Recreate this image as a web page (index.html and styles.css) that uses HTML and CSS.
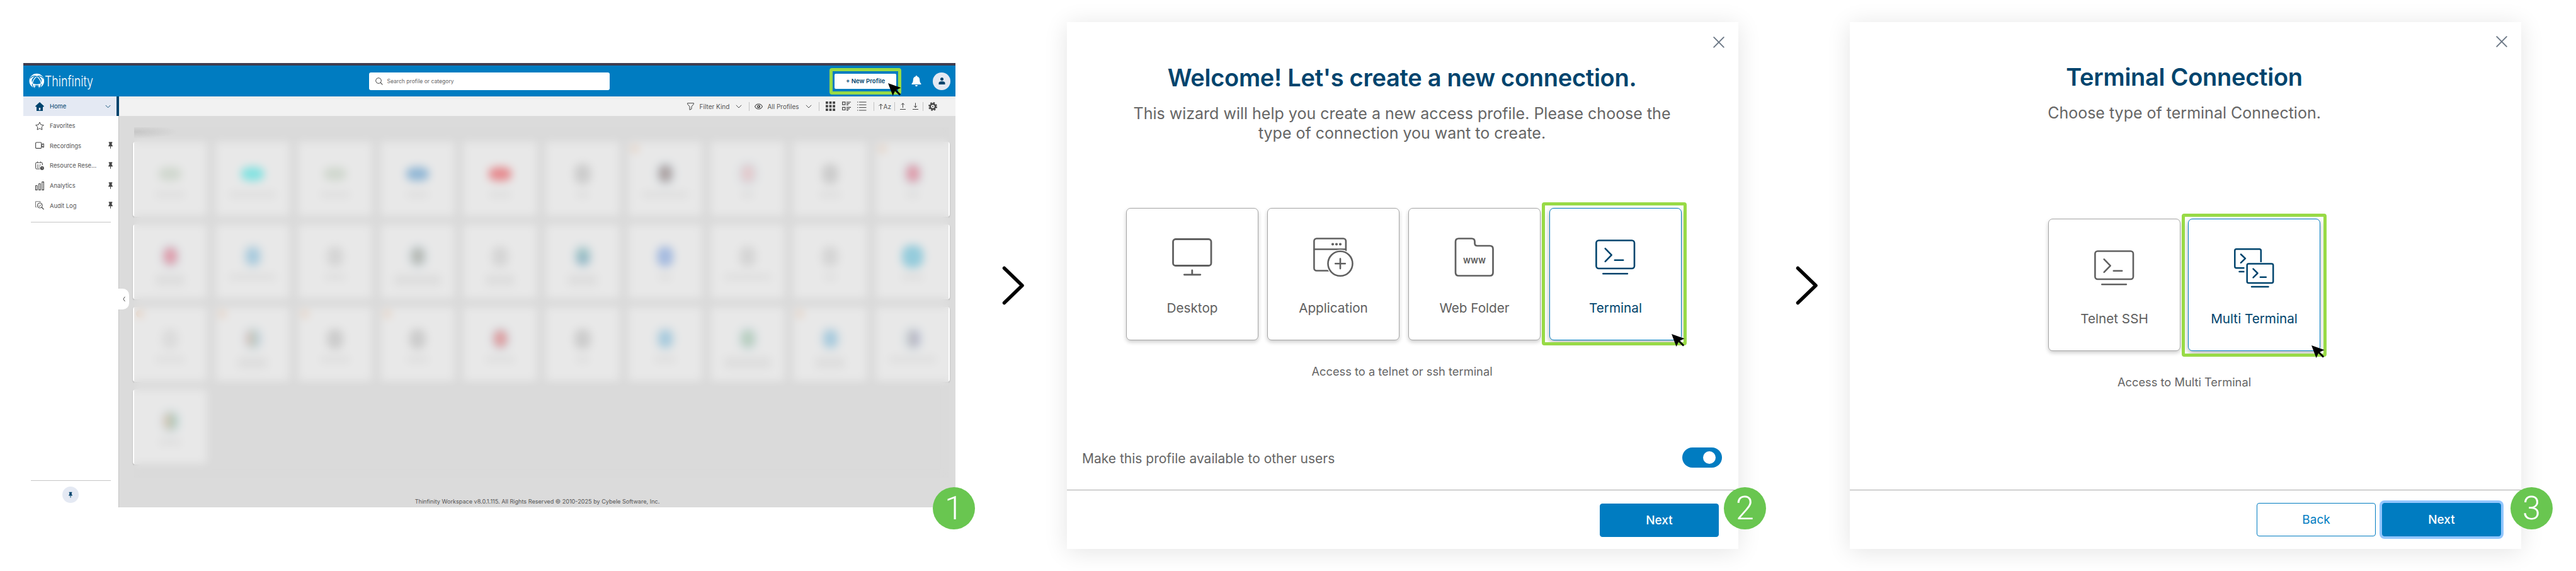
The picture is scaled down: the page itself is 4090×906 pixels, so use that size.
FILE: index.html
```html
<!DOCTYPE html>
<html lang="en">
<head>
  <meta charset="UTF-8">
  <title>Thinfinity - New Terminal Profile</title>
  <link rel="stylesheet" href="styles.css">
</head>
<body>
  <svg class="defs" width="0" height="0">
    <symbol id="pin" viewBox="0 0 8 13">
      <path d="M.8 0h6.4v1.6H6.4v3.6l1.4 1.4v1.2H.2V6.6l1.4-1.4V1.6H.8z"/>
      <path d="M3.4 7.5h1.2V12H3.4z"/>
    </symbol>
    <symbol id="chevron" viewBox="0 0 10 6">
      <path d="M.8 .8L5 5 9.2 .8" fill="none" stroke="currentColor" stroke-width="1"/>
    </symbol>
    <symbol id="cursor" viewBox="0 0 21 20">
      <path d="M0 0l20.5 7.2-7.3 3.2 7 7.2-2 2-7.2-7.2L7.6 20z"/>
    </symbol>
    <symbol id="close" viewBox="0 0 18 18">
      <path d="M1.2 1.2l15.6 15.6M16.8 1.2L1.2 16.8" fill="none" stroke="#6b7785" stroke-width="1.9" stroke-linecap="round"/>
    </symbol>
    <symbol id="next-arrow" viewBox="0 0 36 62">
      <path d="M3.5 3.5L32 31 3.5 58.5" fill="none" stroke="#000" stroke-width="5.5" stroke-linecap="round" stroke-linejoin="round"/>
    </symbol>
    <symbol id="terminal" viewBox="0 0 64 64">
      <g fill="none" stroke="currentColor" stroke-width="2.6" stroke-linecap="round" stroke-linejoin="round">
        <rect x="1.4" y="5.5" width="60.6" height="44.5" rx="4"/>
        <path d="M15.7 18.4l10 10.2-10 10.2M30.8 36.7h13.4M12.3 58.2h38.6"/>
      </g>
    </symbol>
  </svg>

  <main class="flow">
    <!-- Step 1 -->
    <section class="workspace">
      <header class="topbar">
        <div class="logo">
          <svg width="25" height="25" viewBox="0 0 25 25">
            <circle cx="12.3" cy="12.5" r="9.8" fill="none" stroke="#fff" stroke-width="4"/>
            <path d="M12.5 5.2C8.2 8.2 6 12 5.3 17c4.8 2 9.6 2 14.2 0-.6-5-2.8-8.8-7-11.8z" fill="none" stroke="#fff" stroke-width="1.4"/>
            <path d="M12.5 5.5C8.5 3.8 5 4.5 2 8.5M12.5 5.5c4-1.7 7.5-1 10.300 3M5.300 17c0 3 1 5 3.500 7M19.500 17c0 3-1 5-3.500 7" fill="none" stroke="#007cc1" stroke-width="1.200"/>
            <path d="M9 21.500l3.500-1.800 3.500 1.800-.8 3.500H9.800z" fill="#007cc1"/>
          </svg>
          <svg class="wordmark" width="84" height="36" viewBox="0 0 84 36">
            <text x="0" y="25.500" textLength="77" lengthAdjust="spacingAndGlyphs" class="logo-text">Thinfinity</text>
          </svg>
        </div>
        <div class="search">
          <svg width="12" height="12" viewBox="0 0 12 12"><circle cx="5" cy="5" r="4.300" fill="none" stroke="#444" stroke-width="1"/><path d="M8.200 8.200l3.200 3.200" stroke="#444" stroke-width="1.100"/></svg>
          <span>Search profile or category</span>
        </div>
        <div class="spot spot-profile">
          <button class="new-profile">+ New Profile</button>
          <svg class="cursor cursor-profile" width="21" height="20"><use href="#cursor"/></svg>
        </div>
        <svg class="bell" width="16" height="18" viewBox="0 0 16 18"><path d="M8 0c.8 0 1.200.5 1.200 1.200 2.700.6 4 2.700 4 5.300 0 3.200.8 4.800 2 6 .7.700.4 1.600-.6 1.600H1.400c-1 0-1.300-.9-.6-1.600 1.200-1.200 2-2.800 2-6 0-2.600 1.300-4.700 4-5.300C6.800.5 7.200 0 8 0zM6 15h4c0 1.300-.9 2.100-2 2.100S6 16.300 6 15z" fill="#fff"/></svg>
        <div class="avatar">
          <svg width="11" height="11" viewBox="0 0 11 11"><circle cx="5.500" cy="2.600" r="2.500" fill="#00446d"/><path d="M.5 11V8.800C.5 7 2.200 6 5.500 6s5 1 5 2.800V11z" fill="#00446d"/></svg>
        </div>
      </header>

      <div class="workspace-body">
        <aside class="sidebar">
          <a class="nav-item active">
            <svg width="14" height="14" viewBox="0 0 14 14"><path d="M7 0l7 6.500-.7.900H12V14H2V7.400H.7L0 6.500z" fill="#00446d"/><path d="M5.800 9h2.400v3.700H5.800z" fill="#e4e9f3"/></svg>
            <span>Home</span>
            <svg class="nav-chevron" width="9" height="6"><use href="#chevron"/></svg>
          </a>
          <a class="nav-item">
            <svg width="14" height="14" viewBox="0 0 14 14"><path d="M7 .9l1.900 4 4.400.6-3.200 3 .8 4.400L7 10.800l-3.900 2.100.8-4.400-3.200-3 4.400-.6z" fill="none" stroke="#444" stroke-linejoin="round"/></svg>
            <span>Favorites</span>
          </a>
          <a class="nav-item">
            <svg width="14" height="14" viewBox="0 0 14 14"><path d="M2 2h6.500q1.200 0 1.200 1.200v7q0 1.200-1.200 1.200H2Q.6 11.400.6 10.200v-7Q.6 2 2 2zM9.800 6l1.600-.6V4.200h2v5.200h-2V8.200L9.800 7.600" fill="none" stroke="#444" stroke-width="1.100"/></svg>
            <span>Recordings</span>
            <svg class="pin" width="7" height="12"><use href="#pin"/></svg>
          </a>
          <a class="nav-item">
            <svg width="14" height="14" viewBox="0 0 14 14"><path d="M7.500 12H2Q.6 12 .6 10.800V3.200Q.6 2 2 2h8q1.400 0 1.400 1.200V6" fill="none" stroke="#444"/><path d="M3.500.3v2.500M8.500.3v2.500M3.500 5v5.500M6 5v5.500M8.500 5v2" stroke="#444" stroke-dasharray="1.400 .6"/><circle cx="10.800" cy="10.800" r="3" fill="#444"/><path d="M10.800 9v2h1.400" fill="none" stroke="#fff" stroke-width=".6"/></svg>
            <span>Resource Rese...</span>
            <svg class="pin" width="7" height="12"><use href="#pin"/></svg>
          </a>
          <a class="nav-item">
            <svg width="14" height="14" viewBox="0 0 14 14"><path d="M.6 6.500h2.600v6.900H.6zM5.700 3.500h2.600v9.900H5.700zM10.800.6h2.600v12.800h-2.600z" fill="none" stroke="#444" stroke-width="1.100" stroke-linejoin="round"/></svg>
            <span>Analytics</span>
            <svg class="pin" width="7" height="12"><use href="#pin"/></svg>
          </a>
          <a class="nav-item">
            <svg width="14" height="14" viewBox="0 0 14 14"><path d="M2.200 9.500H.5V.8H8v1.400" fill="none" stroke="#666" stroke-width=".9"/><circle cx="7.300" cy="7" r="4" fill="none" stroke="#444"/><path d="M10.300 10l3.300 3.400" stroke="#444" stroke-width="1.300"/><path d="M5.200 7.500l1.500 1.200L9.500 5.500" fill="none" stroke="#444" stroke-width=".9"/></svg>
            <span>Audit Log</span>
            <svg class="pin" width="7" height="12"><use href="#pin"/></svg>
          </a>
          <hr class="nav-rule">
          <div class="sidebar-foot">
            <hr class="nav-rule">
            <div class="pin-button"><svg width="6" height="11"><use href="#pin"/></svg></div>
          </div>
          <div class="collapse"><svg width="4" height="9" viewBox="0 0 4 9"><path d="M3.500.8L.8 4.500l2.700 3.700" fill="none" stroke="#444"/></svg></div>
        </aside>

        <div class="content">
          <div class="toolbar">
            <svg class="t-filter" width="11" height="12" viewBox="0 0 11 12"><path d="M.6.700h9.800v1.500L7 6.200v3.600l-3 1.500V6.200L.6 2.200z" fill="none" stroke="#444" stroke-linejoin="round"/></svg>
            <span>Filter Kind</span>
            <svg class="t-chevron" width="10" height="6"><use href="#chevron"/></svg>
            <i class="sep sep-a"></i>
            <svg class="t-eye" width="13" height="10" viewBox="0 0 13 10"><path d="M.5 5C2 2.300 4 1 6.500 1S11 2.300 12.500 5C11 7.700 9 9 6.500 9S2 7.700.5 5z" fill="none" stroke="#444" stroke-width="1.100"/><circle cx="6.500" cy="5" r="2.500" fill="#444"/><circle cx="6.200" cy="4.700" r="1" fill="#f1f1f1"/></svg>
            <span>All Profiles</span>
            <svg class="t-chevron" width="10" height="6"><use href="#chevron"/></svg>
            <i class="sep sep-b"></i>
            <svg class="t-grid" width="15" height="15" viewBox="0 0 15 15" fill="#444"><path d="M0 0h3.800v3.800H0zM5.600 0h3.800v3.800H5.600zM11.200 0H15v3.800h-3.800zM0 5.600h3.800v3.800H0zM5.600 5.600h3.800v3.800H5.600zM11.200 5.600H15v3.800h-3.800zM0 11.200h3.800V15H0zM5.600 11.200h3.800V15H5.600zM11.200 11.200H15V15h-3.800z"/></svg>
            <svg class="t-tiles" width="14" height="15" viewBox="0 0 14 15" fill="none" stroke="#444" stroke-width="1.200"><path d="M.7.900h4.200v4.200H.7zM.7 9.300h4.200v4.200H.7zM7 1h7M7 3.200h5M7 5.400h3M7 9.400h7M7 11.600h5M7 13.800h3"/></svg>
            <svg class="t-list" width="15" height="15" viewBox="0 0 15 15" stroke="#444" stroke-width="1"><path d="M0 1h1.500M3 1h11.500M0 5.300h1.500M3 5.300h11.500M0 9.600h1.500M3 9.600h11.500M0 14h1.500M3 14h11.500"/></svg>
            <i class="sep sep-c"></i>
            <svg class="t-sort" width="7" height="10" viewBox="0 0 7 10"><path d="M3.500 9.500V1M.5 4l3-3 3 3" fill="none" stroke="#444"/></svg>
            <span>Az</span>
            <i class="sep sep-d"></i>
            <svg class="t-up" width="9" height="11" viewBox="0 0 9 11"><path d="M4.500 8V.8M2 3.300L4.500.8 7 3.300M0 10.500h9" fill="none" stroke="#444"/></svg>
            <svg class="t-down" width="9" height="11" viewBox="0 0 9 11"><path d="M4.500.3v7.200M2 5l2.500 2.500L7 5M0 10.500h9" fill="none" stroke="#444"/></svg>
            <i class="sep sep-e"></i>
            <svg class="t-gear" width="14" height="14" viewBox="0 0 14 14"><circle cx="7" cy="7" r="6.100" fill="none" stroke="#444" stroke-width="1.700" stroke-dasharray="2.600 2.190"/><circle cx="7" cy="7" r="4.100" fill="none" stroke="#444" stroke-width="2.600"/><circle cx="7" cy="7" r="1" fill="#444"/></svg>
          </div>

          <div class="tiles-area">
            <div class="tiles">
              <div class="tile"><i class="app wide sage"></i><i class="name"></i></div>
              <div class="tile"><i class="app wide cyan"></i><i class="name long"></i></div>
              <div class="tile"><i class="app wide sage"></i><i class="name"></i></div>
              <div class="tile"><i class="app wide blue"></i><i class="name short"></i></div>
              <div class="tile"><i class="app wide red"></i><i class="name short"></i></div>
              <div class="tile"><i class="app grey"></i><i class="name tiny"></i></div>
              <div class="tile flagged"><i class="app halo brown"></i><i class="name long"></i></div>
              <div class="tile"><i class="app halo rose"></i><i class="name tiny"></i></div>
              <div class="tile"><i class="app grey"></i><i class="name short"></i></div>
              <div class="tile flagged"><i class="app halo pink"></i><i class="name tiny"></i></div>

              <div class="tile"><i class="app halo pink"></i><i class="name two"></i></div>
              <div class="tile"><i class="app halo sky"></i><i class="name long"></i></div>
              <div class="tile"><i class="app ghost"></i><i class="name short"></i></div>
              <div class="tile"><i class="app halo olive"></i><i class="name long two"></i></div>
              <div class="tile"><i class="app ghost"></i><i class="name two"></i></div>
              <div class="tile"><i class="app halo teal"></i><i class="name two"></i></div>
              <div class="tile"><i class="app royal"></i><i class="name tiny"></i></div>
              <div class="tile"><i class="app ghost"></i><i class="name long"></i></div>
              <div class="tile"><i class="app ghost"></i><i class="name tiny"></i></div>
              <div class="tile"><i class="app big azure"></i><i class="name short"></i></div>

              <div class="tile flagged"><i class="app pale"></i><i class="name"></i></div>
              <div class="tile flagged"><i class="app halo multi"></i><i class="name two"></i></div>
              <div class="tile flagged"><i class="app grey"></i><i class="name"></i></div>
              <div class="tile flagged"><i class="app grey"></i><i class="name short"></i></div>
              <div class="tile"><i class="app halo scarlet"></i><i class="name"></i></div>
              <div class="tile"><i class="app grey"></i><i class="name tiny"></i></div>
              <div class="tile"><i class="app halo sky"></i><i class="name short"></i></div>
              <div class="tile"><i class="app halo green"></i><i class="name long two"></i></div>
              <div class="tile flagged"><i class="app halo sky"></i><i class="name two"></i></div>
              <div class="tile"><i class="app halo violet"></i><i class="name long"></i></div>

              <div class="tile"><i class="app halo sunset"></i><i class="name short"></i></div>
            </div>
            <div class="veil"></div>
          </div>
          <footer class="copyright">Thinfinity Workspace v8.0.1.115. All Rights Reserved © 2010-2025 by Cybele Software, Inc.</footer>
        </div>
      </div>
      <span class="step-number">1</span>
    </section>

    <svg class="arrow" width="36" height="62"><use href="#next-arrow"/></svg>

    <!-- Step 2 -->
    <section class="dialog">
      <svg class="close" width="18" height="18"><use href="#close"/></svg>
      <h2>Welcome! Let's create a new connection.</h2>
      <p class="subtitle">This wizard will help you create a new access profile. Please choose the<br>type of connection you want to create.</p>
      <div class="cards">
        <div class="card">
          <svg width="64" height="64" viewBox="0 0 64 64" fill="none" stroke="currentColor" stroke-width="2.800" stroke-linecap="round">
            <rect x="1.500" y="3.500" width="60.500" height="42" rx="4"/>
            <path d="M31.800 53v6M19.300 59.800h25.500"/>
          </svg>
          <span>Desktop</span>
        </div>
        <div class="card">
          <svg width="64" height="64" viewBox="0 0 64 64" fill="none" stroke="currentColor" stroke-width="2.600" stroke-linecap="round">
            <rect x="1.400" y="2.500" width="50.500" height="51" rx="4"/>
            <path d="M1.400 19.500h50.500"/>
            <path d="M31 11.500h.01M37 11.500h.01M43 11.500h.01" stroke-width="4.200"/>
            <circle cx="43" cy="42.300" r="20.500" fill="#fff" stroke="#fff" stroke-width="3"/>
            <circle cx="43" cy="42.300" r="19.500"/>
            <path d="M43 34.500v15.600M35.200 42.300h15.600"/>
          </svg>
          <span>Application</span>
        </div>
        <div class="card">
          <svg width="64" height="64" viewBox="0 0 64 64">
            <path d="M7 2.500h20.500q5 0 5 5v2.500q0 4 4 4H56.500q5 0 5 5v37.500q0 5-5 5H7q-5 0-5-5V7.500q0-5 5-5z" fill="none" stroke="currentColor" stroke-width="2.700"/>
            <text x="32" y="41.500" text-anchor="middle" textLength="36" lengthAdjust="spacingAndGlyphs" class="www">www</text>
          </svg>
          <span>Web Folder</span>
        </div>
        <div class="card selected">
          <svg width="64" height="64"><use href="#terminal"/></svg>
          <span>Terminal</span>
          <div class="ring"></div>
          <svg class="cursor cursor-card" width="21" height="20"><use href="#cursor"/></svg>
        </div>
      </div>
      <p class="hint">Access to a telnet or ssh terminal</p>
      <div class="share">
        <span>Make this profile available to other users</span>
        <div class="toggle"><i></i></div>
      </div>
      <footer class="actions">
        <button class="btn primary">Next</button>
      </footer>
      <span class="step-number">2</span>
    </section>

    <svg class="arrow arrow-two" width="36" height="62"><use href="#next-arrow"/></svg>

    <!-- Step 3 -->
    <section class="dialog terminal-dialog">
      <svg class="close" width="18" height="18"><use href="#close"/></svg>
      <h2>Terminal Connection</h2>
      <p class="subtitle">Choose type of terminal Connection.</p>
      <div class="cards">
        <div class="card">
          <svg width="64" height="64"><use href="#terminal"/></svg>
          <span>Telnet SSH</span>
        </div>
        <div class="card selected">
          <svg width="64" height="64" viewBox="0 0 64 64" fill="none" stroke="currentColor" stroke-width="2.500" stroke-linecap="round" stroke-linejoin="round">
            <rect x="1.300" y="2.300" width="41.500" height="30" rx="2.500"/>
            <path d="M10.900 10.500l7 6.700-7 6.700M8.500 38h10"/>
            <path d="M16.500 23h48v36h-48z" fill="#fff" stroke="none"/>
            <rect x="20.700" y="25.500" width="41.500" height="30.500" rx="2.500"/>
            <path d="M30.500 33.700l7 6.800-7 6.800M41.800 46.700h9M28 62h26.500"/>
          </svg>
          <span>Multi Terminal</span>
          <div class="ring"></div>
          <svg class="cursor cursor-card" width="21" height="20"><use href="#cursor"/></svg>
        </div>
      </div>
      <p class="hint">Access to Multi Terminal</p>
      <footer class="actions">
        <button class="btn outline">Back</button>
        <button class="btn primary focused">Next</button>
      </footer>
      <span class="step-number">3</span>
    </section>
  </main>
</body>
</html>
```
FILE: styles.css
```css
* {
  box-sizing: border-box;
}
body {
  margin: 0;
  font-family: Inter, "Liberation Sans", sans-serif;
  background-color: #fff;
  color: #666;
}
svg {
  display: block;
  flex: none;
}
.defs {
  position: absolute;
}
.flow {
  display: flex;
  align-items: flex-start;
  height: 906px;
  padding: 35px 0 0 37px;
  overflow: hidden;
}
.arrow {
  margin: 387px 67px 0 74px;
}
.arrow-two {
  margin: 387px 50px 0 91px;
}

/* workspace */
.workspace {
  position: relative;
  flex: none;
  width: 1480px;
  height: 705px;
  margin-top: 65px;
  border-top: 4px solid #413d4e;
}
.topbar {
  display: flex;
  align-items: center;
  height: 49px;
  padding: 0 8px 0 9px;
  background-color: #007cc1;
}
.logo {
  display: flex;
  align-items: center;
  width: 541px;
}
.wordmark {
  overflow: visible;
}
.logo-text {
  font-size: 22.5px;
  font-weight: 300;
  fill: #fff;
}
.search {
  display: flex;
  align-items: center;
  gap: 6px;
  width: 382px;
  height: 28px;
  padding-left: 10px;
  background-color: #fff;
  border-radius: 3px;
  font-size: 8.6px;
}
.spot {
  position: relative;
  width: 114px;
  height: 42px;
  margin-left: 349px;
  padding: 4px 3px;
  border: 5px solid #98da46;
  border-radius: 4px;
}
.new-profile {
  display: block;
  width: 98px;
  height: 24px;
  padding: 0;
  border: 0;
  border-radius: 2px;
  background-color: #fff;
  color: #00446d;
  font: 600 9.6px Inter, sans-serif;
}
.cursor {
  position: absolute;
}
.cursor-profile {
  left: 88px;
  top: 19px;
}
.bell {
  margin: 0 18px 0 16px;
}
.avatar {
  display: flex;
  align-items: center;
  justify-content: center;
  width: 28px;
  height: 28px;
  margin-left: auto;
  border-radius: 50%;
  background-color: #e4e9f3;
}
.workspace-body {
  display: flex;
  height: 652px;
}
.sidebar {
  position: relative;
  display: flex;
  flex-direction: column;
  width: 152px;
  border-right: 1px solid #c4c4c4;
  background-color: #fff;
}
.nav-item {
  display: flex;
  align-items: center;
  gap: 9px;
  height: 31.6px;
  padding: 0 9px 0 19px;
  font-size: 9.4px;
  color: #555;
}
.nav-item.active {
  height: 31px;
  margin-right: -1px;
  padding-right: 9px;
  border-right: 4px solid #00446d;
  background-color: #e4e9f3;
  color: #00446d;
}
.nav-chevron {
  margin-left: auto;
}
.pin {
  margin-left: auto;
  fill: #444;
}
.nav-rule {
  width: 127px;
  height: 1px;
  margin: 10px 0 0 12px;
  border: 0;
  background-color: #c6c6c6;
}
.sidebar-foot {
  margin-top: auto;
  height: 43px;
}
.sidebar-foot .nav-rule {
  margin-top: 0;
}
.pin-button {
  display: flex;
  align-items: center;
  justify-content: center;
  width: 26px;
  height: 26px;
  margin: 9px 0 0 62px;
  border-radius: 50%;
  background-color: #e4e9f3;
  fill: #00446d;
}
.collapse {
  position: absolute;
  z-index: 2;
  left: 151px;
  top: 305px;
  display: flex;
  align-items: center;
  justify-content: center;
  width: 17px;
  height: 33px;
  border-radius: 0 10px 10px 0;
  background-color: #fff;
}
.content {
  flex: 1;
  display: flex;
  flex-direction: column;
  background-color: #dbdbdb;
}
.toolbar {
  display: flex;
  align-items: center;
  height: 31px;
  padding-right: 29px;
  justify-content: flex-end;
  background: linear-gradient(#ececec, #f2f2f2 6px);
  color: #555;
  font-size: 10px;
}
.t-filter {
  margin-right: 9px;
}
.t-chevron {
  margin-left: 10px;
}
.sep {
  width: 1px;
  height: 14px;
  background-color: #c2c2c2;
}
.sep-a { margin: 0 8px 0 11px; }
.sep-b { margin: 0 10px 0 11px; }
.sep-c { margin: 0 7px 0 11px; }
.sep-d { margin: 0 8px 0 5px; }
.sep-e { margin: 0 8px 0 7px; }
.t-eye { margin-right: 7px; }
.t-tiles { margin: 0 10px 0 11px; }
.t-sort { margin-right: 1px; }
.t-down { margin-left: 11px; }
.tiles-area {
  position: relative;
  flex: 1;
  padding: 41px 0 0 22px;
}
.tiles {
  display: grid;
  grid-template-columns: repeat(10, 118px);
  gap: 12.5px 13px;
}
.tile {
  position: relative;
  display: flex;
  flex-direction: column;
  align-items: center;
  height: 118.5px;
  padding-top: 35px;
  border-radius: 4px;
  background-color: #fff;
  box-shadow: 0 1px 2px rgba(0, 0, 0, 0.25);
}
.tile.flagged::before {
  content: "";
  position: absolute;
  left: 5px;
  top: 5px;
  width: 12px;
  height: 12px;
  border-radius: 50%;
  background-color: #f7c39b;
}
.app {
  width: 26px;
  height: 32px;
  border-radius: 40%;
}
.app.wide {
  width: 36px;
  height: 22px;
  margin: 5px 0;
}
.app.big {
  width: 34px;
  height: 36px;
  margin: -2px 0;
}
.app.halo {
  width: 21px;
  height: 27px;
  margin: 2px 0 3px;
  box-shadow: 0 0 0 6px #dcedf6;
}
/* icon colours */
.sage { background-color: #c4d6c0; }
.cyan { background-color: #04f0ee; }
.blue { background-color: #2a86d0; }
.red { background-color: #f81822; }
.grey { background-color: #bababa; }
.ghost { background-color: #d0d0d0; }
.pale { background-color: #e0e0e0; }
.brown { background-color: #6a5050; }
.rose { background-color: #f5b5bb; }
.pink { background-color: #e84468; }
.sky { background-color: #5cb4e4; }
.olive { background-color: #848c80; }
.teal { background: linear-gradient(#55b0a8, #1c78a8); }
.royal { background-color: #5a90ea; }
.azure { background-color: #30b8e0; }
.scarlet { background-color: #e4484e; }
.green { background-color: #88c09a; }
.multi { background: linear-gradient(90deg, #f08080, #90c8a0 60%, #90a0e8); }
.violet { background: linear-gradient(90deg, #c8d4d8, #807c90 55%, #9090d8); }
.sunset { background: linear-gradient(90deg, #f0a070, #50b898); }
.name {
  width: 46px;
  height: 7px;
  margin-top: 13px;
  border-radius: 3px;
  background-color: #dcdcdc;
}
.name.long { width: 74px; }
.name.short { width: 34px; }
.name.tiny { width: 20px; }
.name.two {
  height: 17px;
  background-color: #e4e4e4;
}
/* blurred sheet over the profile names */
.veil {
  position: absolute;
  left: 24px;
  top: 18px;
  width: 1293px;
  height: 556px;
  background-color: rgba(217, 217, 217, 0.6);
  backdrop-filter: blur(7px);
}
.veil::before {
  content: "";
  display: block;
  width: 70px;
  height: 18px;
  background: radial-gradient(ellipse at 0 40%, #c6c6c6, transparent 70%);
}
.copyright {
  height: 18px;
  font-size: 9.1px;
  line-height: 18px;
  text-align: center;
  color: #555;
}
.step-number {
  position: absolute;
  right: -31px;
  bottom: -35px;
  display: flex;
  align-items: center;
  justify-content: center;
  width: 67px;
  height: 67px;
  border-radius: 50%;
  background-color: #69c650;
  color: #fff;
  font-family: Roboto, Inter, sans-serif;
  font-size: 52px;
  font-weight: 300;
}

/* wizard dialogs */
.dialog {
  position: relative;
  flex: none;
  display: flex;
  flex-direction: column;
  width: 1066px;
  height: 836px;
  padding-top: 65px;
  background-color: #fff;
  box-shadow: 0 4px 36px rgba(0, 0, 0, 0.11);
}
.dialog .step-number {
  right: -44px;
  bottom: 31px;
}
.close {
  position: absolute;
  right: 22px;
  top: 23px;
}
h2 {
  margin: 0;
  padding-right: 2px;
  color: #00446d;
  font-size: 38px;
  font-weight: 600;
  line-height: 46px;
  letter-spacing: -0.28px;
  text-align: center;
}
.subtitle {
  margin: 19px 0 0;
  padding-right: 2px;
  font-size: 25px;
  line-height: 31px;
  text-align: center;
}
.cards {
  display: flex;
  gap: 14px;
  margin: 103px 0 0 94px;
}
.card {
  position: relative;
  display: flex;
  flex-direction: column;
  align-items: center;
  width: 210px;
  height: 210px;
  padding-top: 45px;
  border: 1px solid #a6a6a6;
  border-radius: 7px;
  background-color: #fff;
  box-shadow: 0 3px 6px rgba(0, 0, 0, 0.2);
  color: #606060;
}
.card span {
  margin-top: 37px;
  font-size: 20.7px;
  line-height: 24px;
}
.card.selected {
  border-color: #007cc1;
  box-shadow: 0 3px 8px rgba(0, 0, 0, 0.3);
  color: #00446d;
}
.www {
  font-size: 16.5px;
  font-weight: 600;
  fill: currentColor;
}
.ring {
  position: absolute;
  left: -13px;
  top: -10px;
  width: 230px;
  height: 227px;
  border: 5px solid #98da46;
  border-radius: 4px;
}
.cursor-card {
  left: 193px;
  top: 199px;
}
.hint {
  margin: 38px 0 0;
  padding-right: 2px;
  font-size: 18.3px;
  line-height: 22px;
  text-align: center;
}
.share {
  display: flex;
  align-items: center;
  justify-content: space-between;
  margin: 110px 26px 0 24px;
  font-size: 21px;
  line-height: 24px;
}
.share span {
  padding-top: 4px;
}
.toggle {
  display: flex;
  align-items: center;
  justify-content: flex-end;
  width: 63px;
  height: 32px;
  padding-right: 10px;
  border-radius: 16px;
  background-color: #007cc1;
}
.toggle i {
  width: 20px;
  height: 20px;
  border-radius: 50%;
  background-color: #fff;
}
.actions {
  display: flex;
  justify-content: flex-end;
  gap: 10px;
  height: 94px;
  margin-top: auto;
  padding: 21px 31px 0 0;
  border-top: 1px solid #a8a8a8;
}
.btn {
  width: 189px;
  height: 53px;
  padding: 0;
  border: 1px solid #007cc1;
  border-radius: 4px;
  font: 500 19px Inter, sans-serif;
}
.btn.primary {
  background-color: #007cc1;
  color: #fff;
}
.btn.outline {
  background-color: #fff;
  color: #007cc1;
  font-weight: 400;
}
.btn.focused {
  box-shadow: 0 0 0 4px #92c6fd;
}
.terminal-dialog {
  padding-top: 64px;
}
.terminal-dialog h2,
.terminal-dialog .subtitle,
.terminal-dialog .hint {
  padding-right: 4px;
}
.terminal-dialog .cards {
  margin: 152px 0 0 315px;
  gap: 12px;
}
.terminal-dialog .close {
  top: 22px;
}
.terminal-dialog .ring {
  left: -11px;
  top: -9px;
}
.terminal-dialog .cursor-card {
  left: 195px;
  top: 200px;
}
.terminal-dialog .actions {
  padding: 20px 32px 0 0;
}
.terminal-dialog .step-number {
  right: -50px;
}
```
